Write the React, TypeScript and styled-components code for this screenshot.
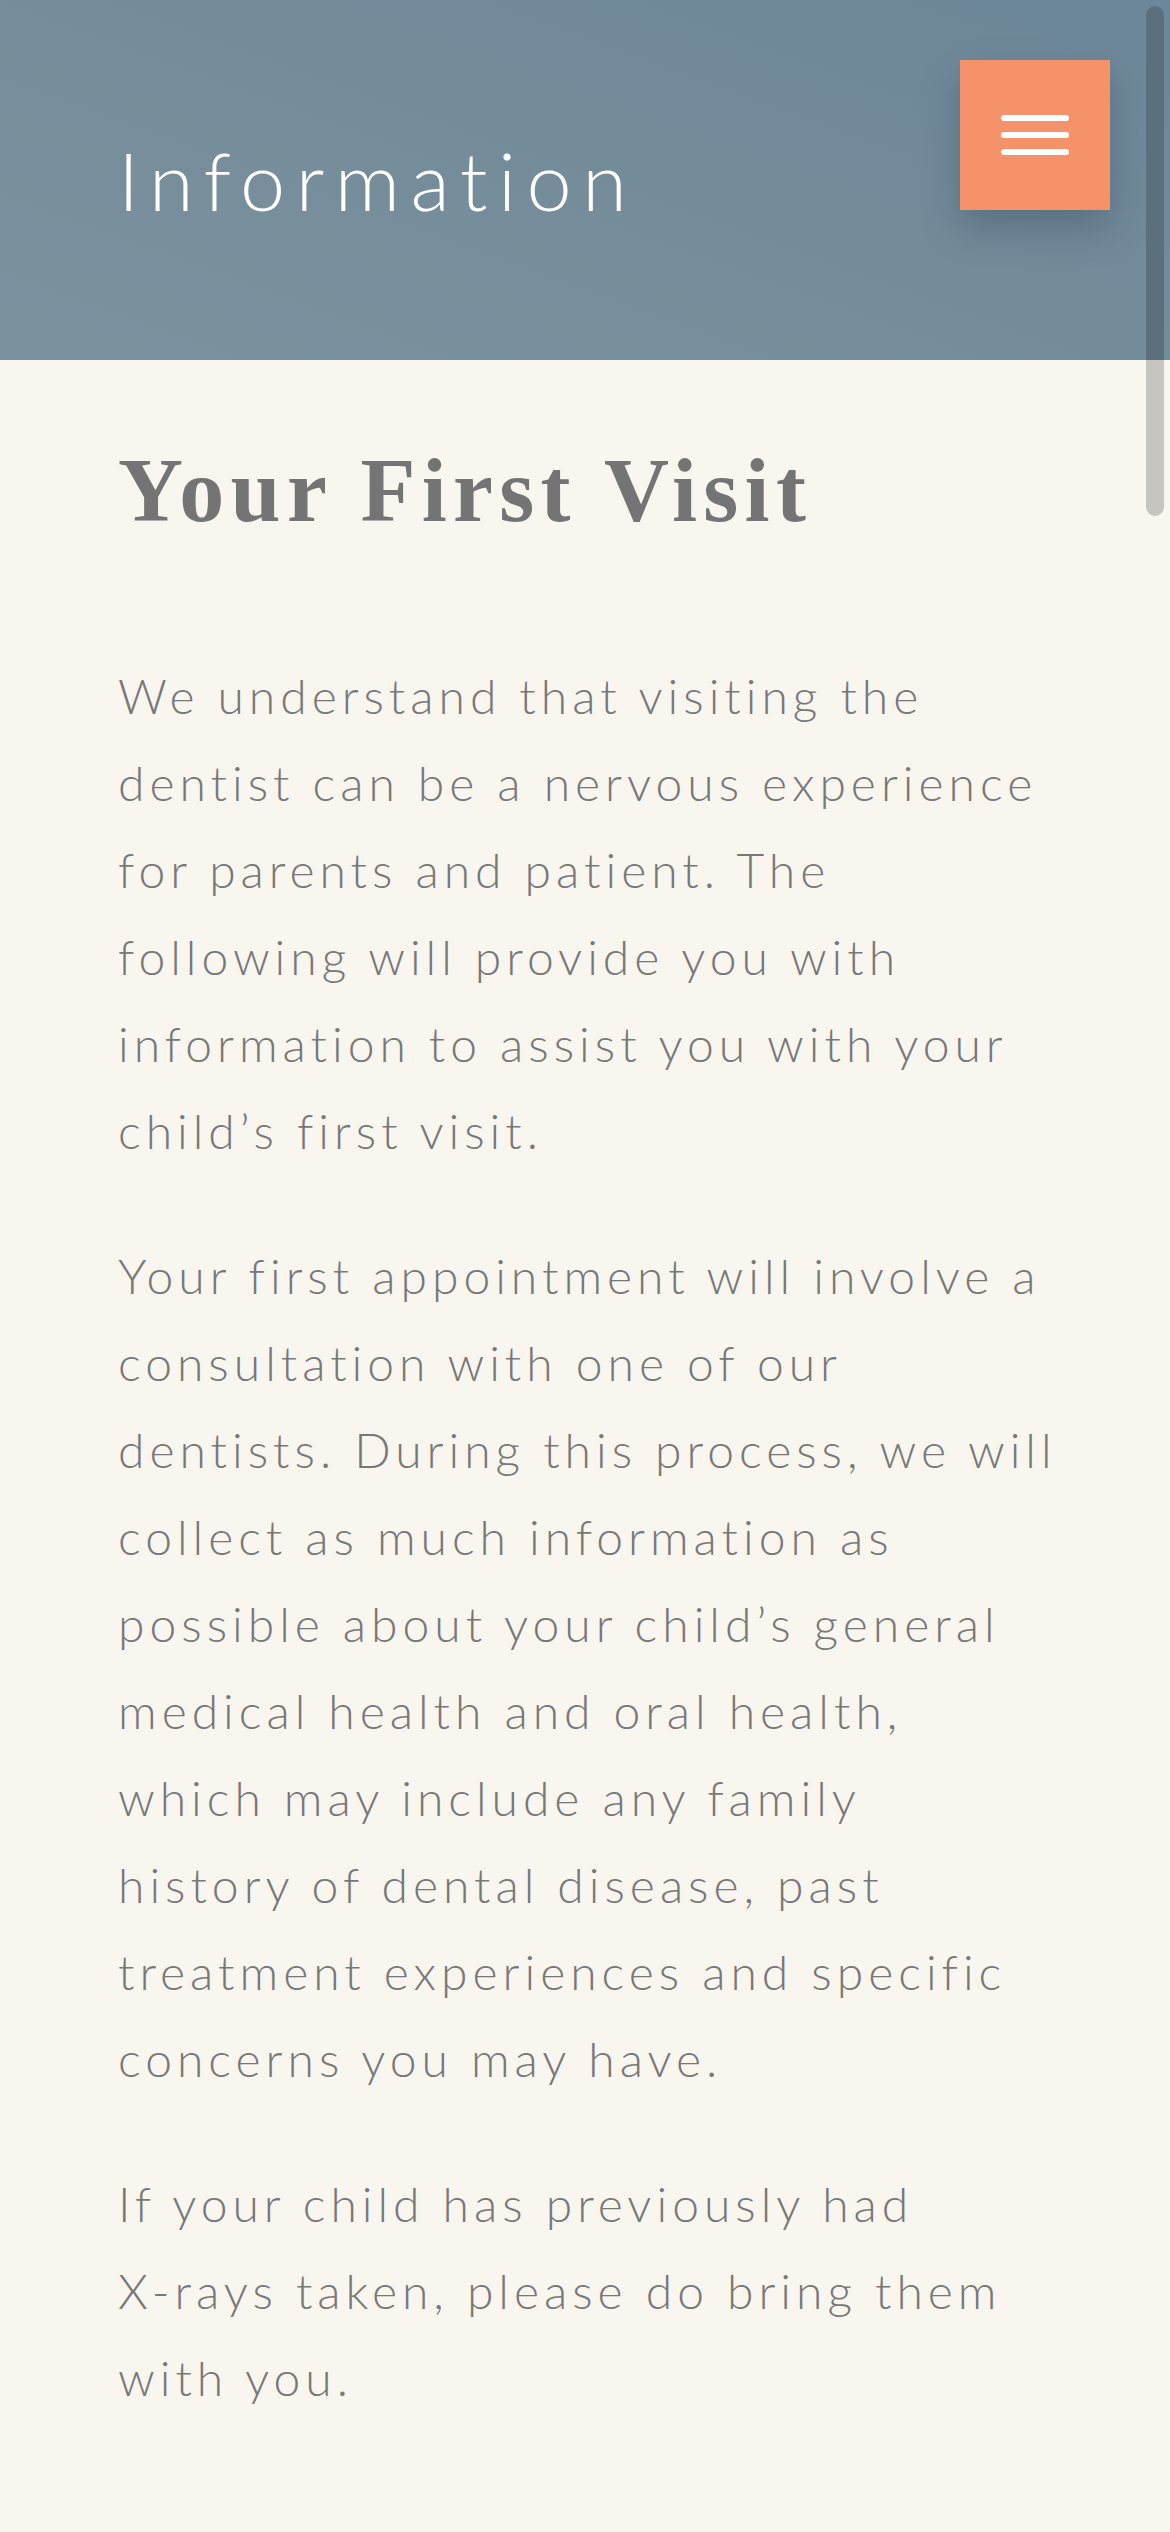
import React from "react";
import styled, { createGlobalStyle } from "styled-components";

const Global = createGlobalStyle`
  html, body { margin: 0; padding: 0; background: #f9f6f0; }
  body { font-family: "Lato", "Noto Sans", sans-serif; -webkit-font-smoothing: antialiased; }
  * { box-sizing: border-box; }
`;

const Page = styled.div`
  min-height: 2532px;
  background: #f9f6f0;
`;

const Header = styled.header`
  height: 360px;
  display: flex;
  justify-content: space-between;
  align-items: flex-start;
  padding: 60px 60px 0 118px;
  background: linear-gradient(200deg, #6c879b 0%, #748b99 45%, #7c929f 100%);
`;

const PageTitle = styled.h1`
  margin: 79px 0 0;
  font-family: "Lato", sans-serif;
  font-weight: 300;
  font-size: 81px;
  line-height: 1;
  letter-spacing: 10.5px;
  color: #ffffff;
`;

const MenuButton = styled.button`
  width: 150px;
  height: 150px;
  border: none;
  background: #f6926a;
  display: flex;
  flex-direction: column;
  align-items: center;
  justify-content: center;
  gap: 11px;
  padding: 0;
  box-shadow: 0 18px 34px rgba(45, 70, 85, 0.35);
  cursor: pointer;
`;

const MenuLine = styled.span`
  display: block;
  width: 68px;
  height: 6px;
  border-radius: 3px;
  background: #ffffff;
`;

const Content = styled.main`
  padding: 81px 118px 80px;
`;

const Heading = styled.h2`
  margin: 0 0 111px;
  font-family: "Liberation Serif", "Times New Roman", serif;
  font-weight: 700;
  font-size: 90px;
  line-height: 100px;
  letter-spacing: 6.3px;
  color: #747474;
`;

const Paragraph = styled.p`
  margin: 0 0 58px;
  font-family: "Lato", sans-serif;
  font-weight: 300;
  font-size: 48px;
  line-height: 87px;
  letter-spacing: 5px;
  color: #787878;
  white-space: nowrap;
`;

const ScrollTrack = styled.div`
  position: fixed;
  top: 6px;
  right: 6px;
  width: 18px;
  height: 510px;
  border-radius: 9px;
  overflow: hidden;
  display: flex;
  flex-direction: column;
`;

const ScrollPart = styled.div<{ $dark?: boolean; $h: number }>`
  height: ${(p) => p.$h}px;
  background: ${(p) => (p.$dark ? "#5b6f7c" : "#c6c5c0")};
`;

const paragraphs: string[][] = [
  [
    "We understand that visiting the",
    "dentist can be a nervous experience",
    "for parents and patient. The",
    "following will provide you with",
    "information to assist you with your",
    "child’s first visit.",
  ],
  [
    "Your first appointment will involve a",
    "consultation with one of our",
    "dentists. During this process, we will",
    "collect as much information as",
    "possible about your child’s general",
    "medical health and oral health,",
    "which may include any family",
    "history of dental disease, past",
    "treatment experiences and specific",
    "concerns you may have.",
  ],
  [
    "If your child has previously had",
    "X-rays taken, please do bring them",
    "with you.",
  ],
];

export default function App() {
  return (
    <Page>
      <Global />
      <Header>
        <PageTitle>Information</PageTitle>
        <MenuButton aria-label="Menu">
          <MenuLine />
          <MenuLine />
          <MenuLine />
        </MenuButton>
      </Header>
      <Content>
        <Heading>Your First Visit</Heading>
        {paragraphs.map((lines, i) => (
          <Paragraph key={i}>
            {lines.map((line, j) => (
              <React.Fragment key={j}>
                {line}
                {j < lines.length - 1 && <br />}
              </React.Fragment>
            ))}
          </Paragraph>
        ))}
      </Content>
      <ScrollTrack>
        <ScrollPart $dark $h={354} />
        <ScrollPart $h={156} />
      </ScrollTrack>
    </Page>
  );
}
